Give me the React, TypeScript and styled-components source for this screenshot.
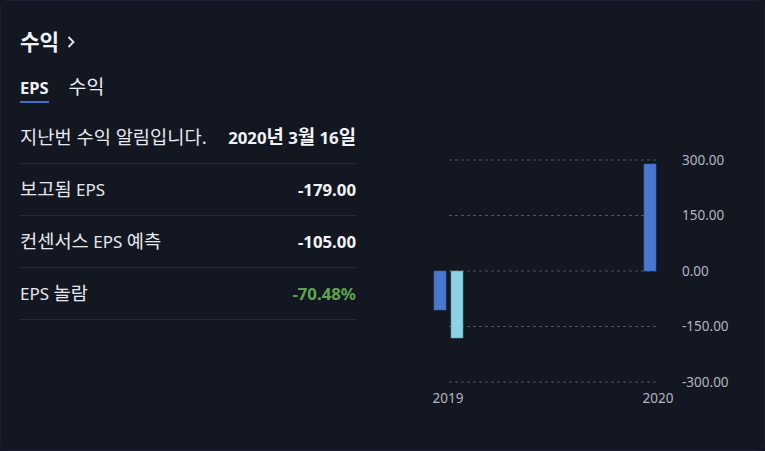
import React from "react";
import styled, { createGlobalStyle } from "styled-components";

const Global = createGlobalStyle`
  html, body { margin: 0; padding: 0; background: #131722; }
  body { font-family: "Noto Sans", "Noto Sans CJK KR", sans-serif; }
`;

const Card = styled.div`
  box-sizing: border-box;
  width: 765px;
  height: 451px;
  background: #131722;
  border: 1px solid #1c2030;
  border-radius: 8px;
  padding: 28px 0 0 19px;
  color: #e6e8ee;
  font-family: "Noto Sans", "Noto Sans CJK KR", sans-serif;
`;

const Ko = styled.span<{ $scale?: number }>`
  font-size: ${(p) => p.$scale ?? 1.18}em;
  line-height: 1;
`;

const Title = styled.h2`
  margin: 0;
  font-size: 18px;
  font-weight: 700;
  line-height: 26px;
  height: 26px;
  color: #f0f3fa;
  display: flex;
  align-items: center;
  gap: 7px;
`;

const Tabs = styled.div`
  display: flex;
  gap: 20px;
  margin-top: 22px;
`;

const Tab = styled.div<{ $active?: boolean }>`
  font-size: 16.5px;
  line-height: 22px;
  height: 22px;
  font-weight: ${(p) => (p.$active ? 700 : 400)};
  color: #eef0f5;
  padding-bottom: 2px;
  border-bottom: 2px solid ${(p) => (p.$active ? "#3d6fd1" : "transparent")};
`;

const Body = styled.div`
  display: flex;
  margin-top: 9px;
`;

const Table = styled.div`
  width: 336px;
  flex-shrink: 0;
  display: flex;
  flex-direction: column;
`;

const Row = styled.div`
  display: flex;
  justify-content: space-between;
  align-items: center;
  height: 51px;
  border-bottom: 1px solid #262a35;
`;

const Label = styled.span`
  font-size: 17px;
  color: #e6e8ee;
`;

const Value = styled.span<{ $color?: string }>`
  font-size: 16.8px;
  font-weight: 700;
  color: ${(p) => p.$color || "#f2f4f8"};
`;

const ChartWrap = styled.div`
  flex: 1;
  padding-top: 2px;
`;

const grid = [
  { y: 46, label: "300.00" },
  { y: 101.5, label: "150.00" },
  { y: 157, label: "0.00" },
  { y: 212.5, label: "-150.00" },
  { y: 268, label: "-300.00" },
];

const Chart = () => (
  <svg width="405" height="300" viewBox="0 0 405 300">
    {grid.map((g) => (
      <g key={g.label}>
        <line x1="93" x2="300" y1={g.y} y2={g.y} stroke="#50545f" strokeWidth="1" strokeDasharray="3 3" />
        <text x="326" y={g.y + 4.5} fill="#b2b5be" fontSize="13.5" fontFamily="Noto Sans, sans-serif">
          {g.label}
        </text>
      </g>
    ))}
    <rect x="78" y="157" width="12" height="39" fill="#4a78d0" stroke="#3a5ea8" strokeWidth="0.6" />
    <rect x="95" y="157" width="12" height="67" fill="#8cd4e4" stroke="#5c8f9c" strokeWidth="0.6" />
    <rect x="288" y="50" width="12" height="107" fill="#4a78d0" stroke="#3a5ea8" strokeWidth="0.6" />
    <text x="92" y="289" textAnchor="middle" fill="#b2b5be" fontSize="13.5" fontFamily="Noto Sans, sans-serif">2019</text>
    <text x="302" y="289" textAnchor="middle" fill="#b2b5be" fontSize="13.5" fontFamily="Noto Sans, sans-serif">2020</text>
  </svg>
);

const Chevron = () => (
  <svg width="10" height="14" viewBox="0 0 10 14">
    <path d="M2.5 2 L7.5 7 L2.5 12" fill="none" stroke="#e6e8ee" strokeWidth="1.8" />
  </svg>
);

export default function App() {
  return (
    <>
      <Global />
      <Card>
        <Title>
          <Ko>수익</Ko>
          <Chevron />
        </Title>
        <Tabs>
          <Tab $active>EPS</Tab>
          <Tab>
            <Ko>수익</Ko>
          </Tab>
        </Tabs>
        <Body>
          <Table>
            <Row>
              <Label>
                <Ko $scale={1.1}>지난번 수익 알림입니다.</Ko>
              </Label>
              <Value>
                2020<Ko $scale={1.12}>년</Ko> 3<Ko $scale={1.12}>월</Ko> 16<Ko $scale={1.12}>일</Ko>
              </Value>
            </Row>
            <Row>
              <Label>
                <Ko $scale={1.1}>보고됨</Ko> EPS
              </Label>
              <Value>-179.00</Value>
            </Row>
            <Row>
              <Label>
                <Ko $scale={1.1}>컨센서스</Ko> EPS <Ko $scale={1.1}>예측</Ko>
              </Label>
              <Value>-105.00</Value>
            </Row>
            <Row>
              <Label>
                EPS <Ko $scale={1.1}>놀람</Ko>
              </Label>
              <Value $color="#5fa54f">-70.48%</Value>
            </Row>
          </Table>
          <ChartWrap>
            <Chart />
          </ChartWrap>
        </Body>
      </Card>
    </>
  );
}
